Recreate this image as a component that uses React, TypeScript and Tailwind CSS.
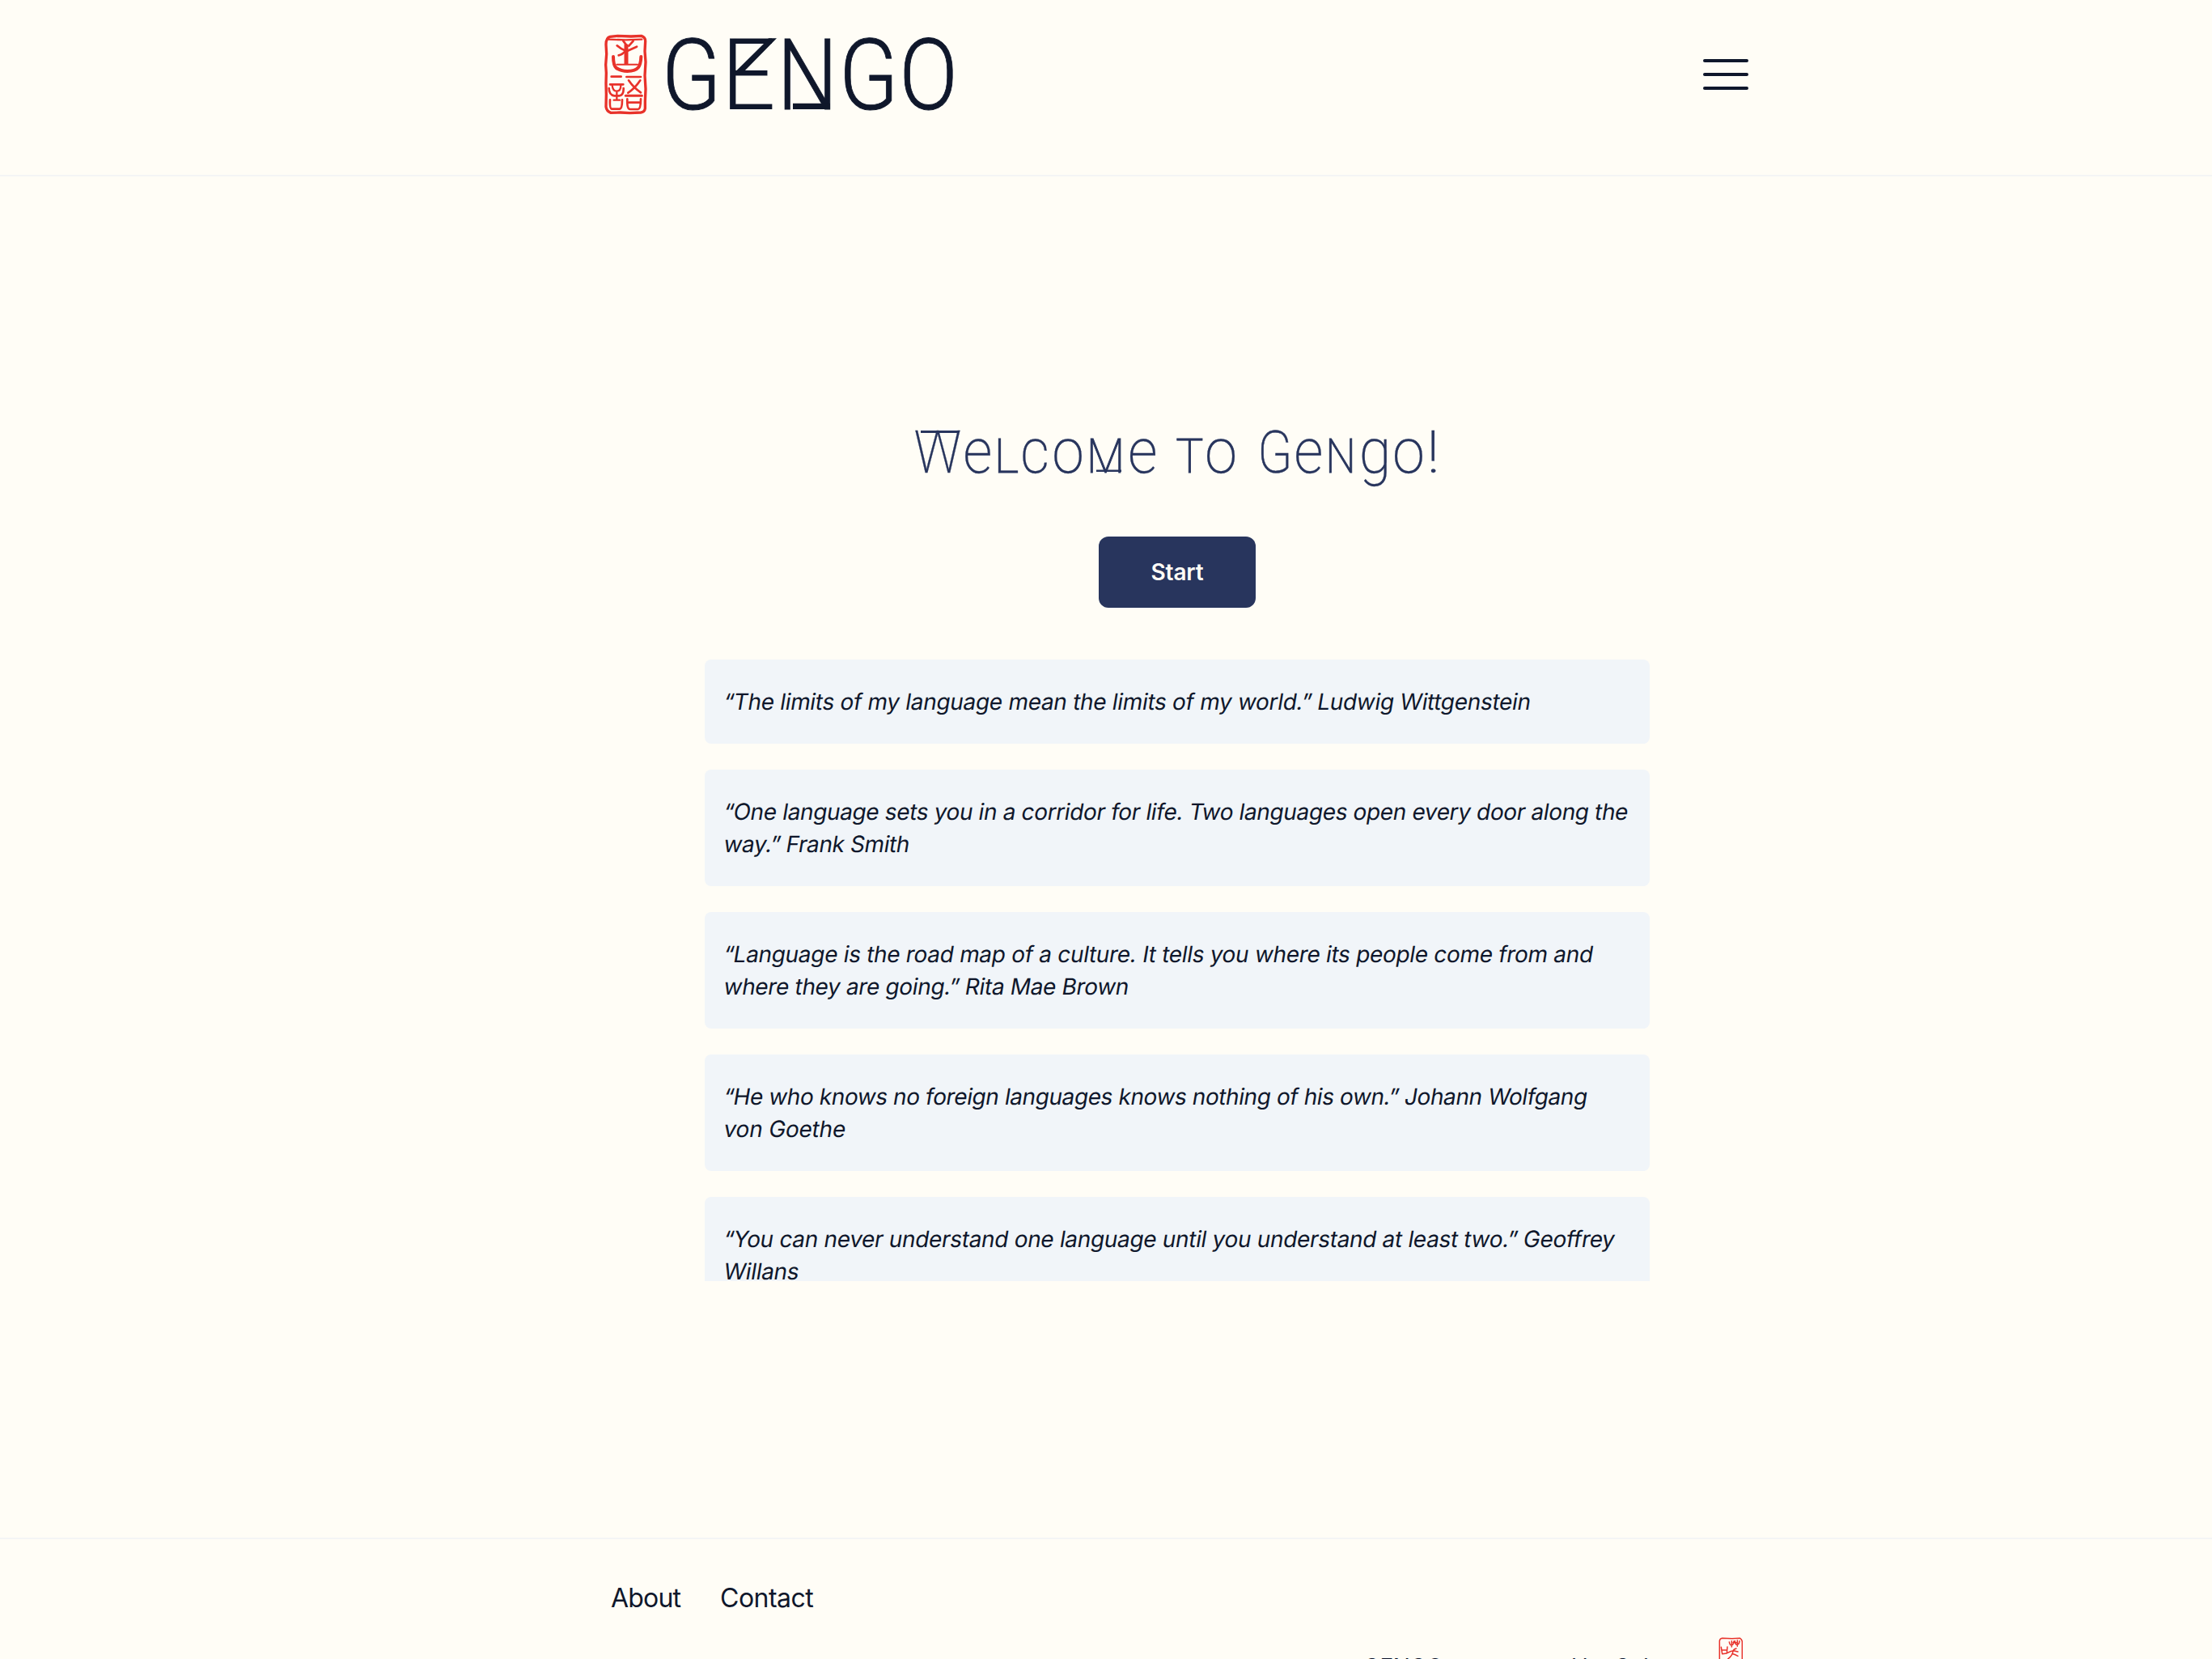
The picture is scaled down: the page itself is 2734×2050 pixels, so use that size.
import React from "react";

type GlyphSpec = {
  c: string;
  left: number; // ink left edge
  right: number; // ink right edge
  size: number;
  weight: number;
  stroke?: number; // extra outline thickness
};

// Side bearings of the Roboto glyphs, in hundredths of an em: [ink left, ink right]
const BEARINGS: Record<string, [number, number]> = {
  W: [2, 88],
  E: [9, 54],
  L: [9, 50.5],
  M: [9, 77.5],
  T: [2, 58],
  N: [9, 62],
  G: [6.5, 61],
  O: [6, 61.5],
  "!": [7.5, 14],
  e: [4, 48],
  c: [4, 47.5],
  o: [4, 52],
  g: [4.5, 47.5],
};

function Lettering({ glyphs, origin }: { glyphs: GlyphSpec[]; origin: number }) {
  return (
    <>
      {glyphs.map((g, i) => {
        const start = i === 0 ? origin : g.left;
        const end = i === glyphs.length - 1 ? g.right : glyphs[i + 1].left;
        const [l, r] = BEARINGS[g.c];
        const scale = (g.right - g.left) / (((r - l) * g.size) / 100);
        const shift = g.left - start - (l * g.size * scale) / 100;
        return (
          <span
            key={i}
            className="inline-block whitespace-nowrap"
            style={{
              width: end - start,
              fontSize: g.size,
              fontWeight: g.weight,
              WebkitTextStrokeWidth: `${g.stroke ?? 0}px`,
            }}
          >
            <span
              className="inline-block origin-left"
              style={{ transform: `translateX(${shift}px) scaleX(${scale})` }}
            >
              {g.c}
            </span>
          </span>
        );
      })}
    </>
  );
}

const LOGO: GlyphSpec[] = [
  { c: "G", left: 824.8, right: 883.5, size: 122.6, weight: 300, stroke: 0.9 },
  { c: "E", left: 901.5, right: 954.5, size: 123.3, weight: 300, stroke: 0.2 },
  { c: "N", left: 970.4, right: 1026.3, size: 123, weight: 300, stroke: 0.8 },
  { c: "G", left: 1044.5, right: 1103, size: 122.6, weight: 300, stroke: 0.9 },
  { c: "O", left: 1117.7, right: 1176.9, size: 122.6, weight: 300, stroke: 0.9 },
];

const TITLE: GlyphSpec[][] = [
  [
    { c: "W", left: 1130.7, right: 1186.7, size: 71.7, weight: 200, stroke: 0.3 },
    { c: "e", left: 1192.7, right: 1224, size: 78.5, weight: 200, stroke: 0.3 },
    { c: "L", left: 1233.7, right: 1258, size: 58.5, weight: 200, stroke: 0.9 },
    { c: "c", left: 1264, right: 1294.3, size: 78.5, weight: 200, stroke: 0.3 },
    { c: "o", left: 1302.7, right: 1337, size: 78.5, weight: 200, stroke: 0.3 },
    { c: "M", left: 1348.5, right: 1386, size: 58.5, weight: 200, stroke: 0.9 },
    { c: "e", left: 1397, right: 1428.7, size: 78.5, weight: 200, stroke: 0.3 },
  ],
  [
    { c: "T", left: 1454.3, right: 1486.4, size: 58.5, weight: 200, stroke: 0.9 },
    { c: "o", left: 1492.3, right: 1527, size: 78.5, weight: 200, stroke: 0.3 },
  ],
  [
    { c: "G", left: 1558.3, right: 1592.7, size: 71.7, weight: 200, stroke: 0.5 },
    { c: "e", left: 1602, right: 1633.3, size: 78.5, weight: 200, stroke: 0.3 },
    { c: "N", left: 1643.3, right: 1671.4, size: 58.5, weight: 200, stroke: 0.9 },
    { c: "g", left: 1683, right: 1714, size: 78.5, weight: 200, stroke: 0.3 },
    { c: "o", left: 1723.7, right: 1758.3, size: 78.5, weight: 200, stroke: 0.3 },
    { c: "!", left: 1768.7, right: 1774, size: 71.7, weight: 200, stroke: 0.3 },
  ],
];

function Seal() {
  return (
    <svg
      className="h-[125px] w-[90px] shrink-0"
      viewBox="0 0 270 375"
      fill="none"
      stroke="#e8322a"
      strokeWidth="10"
      strokeLinecap="round"
      strokeLinejoin="round"
    >
      <path d="M72 46 L100 43 L150 45 L188 43 Q203 48 203 62 L201 100 L204 140 L201 190 L204 240 L202 285 L202 312 Q200 326 186 327 L145 329 L110 327 L75 328 Q59 322 57 306 L58 260 L57 220 L58 180 L56 150 L59 110 L57 75 Q57 50 72 46Z" />
      <path d="M64 56 L130 58 L190 56" strokeWidth="7" />
      <path d="M121 62 L132 76 M158 62 L142 80" strokeWidth="8" />
      <path d="M132 74 V148" strokeWidth="15" strokeLinecap="butt" />
      <path d="M98 79 Q112 92 130 98 M171 83 L136 99 M104 115 Q116 114 130 98" strokeWidth="8" />
      <path d="M84 120 Q84 152 95 162 Q112 174 136 174 Q166 174 177 160 Q186 148 187 120" strokeWidth="12" />
      <path d="M97 149 H174" strokeWidth="6" />
      <path d="M77 194 H113 M72 223 H121 M133 195 H186" strokeWidth="8" />
      <path d="M141 208 Q160 236 186 253 M184 208 Q164 238 139 254" strokeWidth="8" />
      <path d="M130 265 H190" strokeWidth="9" />
      <path d="M68 237 Q68 262 88 265 M122 237 Q123 262 106 265 H92" strokeWidth="8" />
      <path d="M80 226 Q82 248 97 248 Q112 248 112 226 M97 248 V280 M86 281 H108" strokeWidth="7" />
      <path d="M72 280 Q70 312 78 314 H108 Q117 313 117 280" strokeWidth="8" />
      <path d="M136 277 Q134 314 146 315 H176 Q186 314 186 277 M142 290 H180" strokeWidth="8" />
    </svg>
  );
}

function SmallSeal() {
  return (
    <svg
      className="h-[60px] w-[30px] shrink-0"
      viewBox="0 0 90 180"
      fill="none"
      stroke="#e8322a"
      strokeWidth="4.5"
      strokeLinecap="round"
      strokeLinejoin="round"
    >
      <path d="M4 178 V14 Q5 5 14 4 L50 5 L80 4 Q87 8 88 16 V178" />
      <path d="M10 37 L14 62 L31 60 L33 36 M12 48 H31" />
      <path d="M40 18 Q42 30 48 30 Q56 30 57 15 M49 14 V36 M61 14 Q62 28 68 28 Q77 28 78 14 M70 12 V34 M54 20 H66" />
      <path d="M66 42 Q58 44 54 50 M34 58 Q46 50 57 50 Q66 52 72 54 M54 50 Q54 66 34 82 M54 62 Q62 64 72 70" />
    </svg>
  );
}

type Line = { text: string; className: string };

const QUOTES: Line[][] = [
  [
    {
      text: "“The limits of my language mean the limits of my world.” Ludwig Wittgenstein",
      className: "tracking-[-0.31px]",
    },
  ],
  [
    {
      text: "“One language sets you in a corridor for life. Two languages open every door along the",
      className: "tracking-[-0.365px]",
    },
    { text: "way.” Frank Smith", className: "tracking-[-0.4px]" },
  ],
  [
    {
      text: "“Language is the road map of a culture. It tells you where its people come from and",
      className: "tracking-[-0.315px]",
    },
    { text: "where they are going.” Rita Mae Brown", className: "tracking-[-0.35px]" },
  ],
  [
    {
      text: "“He who knows no foreign languages knows nothing of his own.” Johann Wolfgang",
      className: "tracking-[-0.41px]",
    },
    { text: "von Goethe", className: "tracking-[-0.2px]" },
  ],
  [
    {
      text: "“You can never understand one language until you understand at least two.” Geoffrey",
      className: "tracking-[-0.325px]",
    },
    { text: "Willans", className: "tracking-[-0.35px]" },
  ],
];

export default function App() {
  return (
    <div className="h-[2050px] w-[2734px] overflow-hidden bg-[#fffdf6] font-['Inter',sans-serif] text-slate-900">
      <header className="h-[218px] border-b-2 border-[#f4f5f5]">
        <div className="flex items-start pt-[30px] pl-[730px]">
          <Seal />
          <div className="relative h-[125px] w-[380px] pt-[2px] font-['Roboto',sans-serif] leading-none whitespace-nowrap">
            <Lettering glyphs={LOGO} origin={820} />
            <svg
              className="absolute top-0 left-0 h-[125px] w-[380px]"
              viewBox="820 30 380 125"
              fill="#0f172a"
            >
              <path d="M950 47.3 H960 L917 91 H906.5 L944 54 Z" />
              <path d="M980 127.7 H1026 V135 H980 Z" />
            </svg>
          </div>
          <button type="button" aria-label="Menu" className="mt-[43px] ml-[905px] flex flex-col gap-[13px]">
            <span className="h-[4px] w-[56px] rounded-full bg-slate-900" />
            <span className="h-[4px] w-[56px] rounded-full bg-slate-900" />
            <span className="h-[4px] w-[56px] rounded-full bg-slate-900" />
          </button>
        </div>
      </header>

      <main className="flex h-[1682px] w-[2910px] flex-col items-center pt-[298px]">
        <h1 className="relative h-[147px] w-[648px] pt-[2px] font-['Roboto',sans-serif] text-[79px] leading-none whitespace-nowrap text-[#28355d]">
          <span className="inline-block w-[323px]">
            <Lettering glyphs={TITLE[0]} origin={1131} />
          </span>
          <span className="inline-block w-[104px]">
            <Lettering glyphs={TITLE[1]} origin={1454} />
          </span>
          <span className="inline-block">
            <Lettering glyphs={TITLE[2]} origin={1558} />
          </span>
          <svg
            className="absolute top-0 left-0 h-[100px] w-[648px]"
            viewBox="1131 516 648 100"
            fill="#28355d"
          >
            <path d="M1138 532 H1186.5 L1185.5 535 H1138 Z" />
            <path d="M1355 580.5 H1386 V583 H1355 Z" />
          </svg>
        </h1>

        <button
          type="button"
          className="h-[88px] w-[194px] rounded-[12px] bg-[#28355d] text-[28px] leading-[40px] font-semibold tracking-[-0.2px] text-[#fffdf6]"
        >
          Start
        </button>

        <section className="mt-[64px] flex h-[768px] w-[1168px] flex-col gap-[32px] overflow-hidden">
          {QUOTES.map((lines, i) => (
            <blockquote
              key={i}
              className="shrink-0 rounded-[8px] bg-[#f1f5f9] px-[24px] py-[32px] text-[28px] leading-[40px] whitespace-nowrap"
            >
              {lines.map((line) => (
                <div key={line.text} className="-skew-x-[9.4deg]">
                  <span className={line.className}>{line.text}</span>
                </div>
              ))}
            </blockquote>
          ))}
        </section>
      </main>

      <footer className="border-t-2 border-[#f4f5f5]">
        <nav className="flex pt-[51px] pl-[755px] text-[32px] leading-[44px]">
          <a className="w-[135px] tracking-[-0.8px]">About</a>
          <a className="tracking-[-0.5px]">Contact</a>
        </nav>
        <div className="flex pt-[26px] pl-[1685px] text-[28px] leading-[40px] whitespace-nowrap">
          <p className="w-[439px] pt-[17px] tracking-[-0.45px]">GENGO was created by Colomer</p>
          <SmallSeal />
        </div>
      </footer>
    </div>
  );
}
